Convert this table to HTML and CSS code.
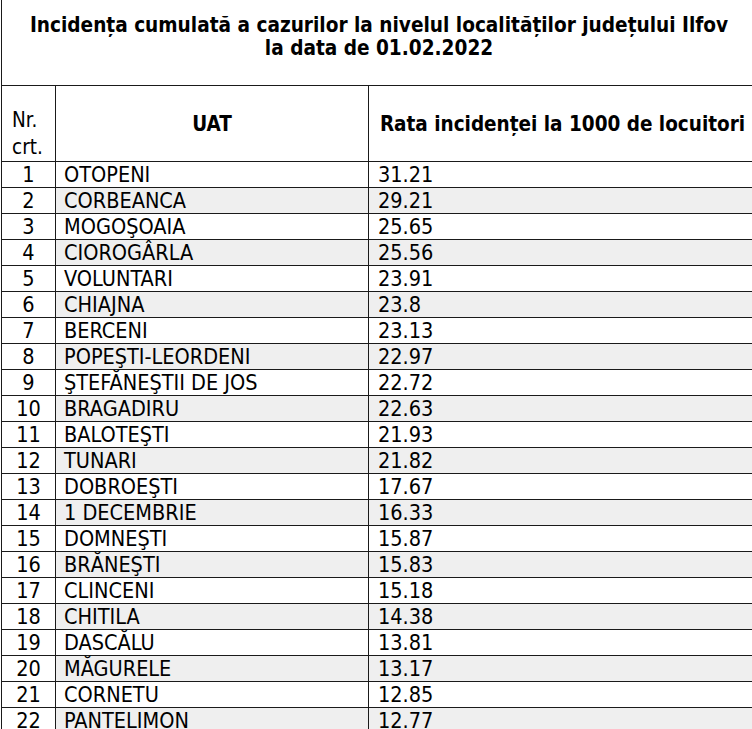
FILE: index.html
```html
<!DOCTYPE html>
<html lang="ro">
<head>
<meta charset="utf-8">
<title>Incidența cumulată Ilfov</title>
<link rel="stylesheet" href="styles.css">
</head>
<body>
<table class="grid">
  <colgroup>
    <col class="c-nr">
    <col class="c-uat">
    <col class="c-rate">
  </colgroup>
  <tr class="title-row">
    <td colspan="3" class="title">Incidența cumulată a cazurilor la nivelul localităților județului Ilfov<br>la data de 01.02.2022</td>
  </tr>
  <tr class="head-row">
    <td class="h-nr">Nr.<br>crt.</td>
    <td class="h-uat">UAT</td>
    <td class="h-rate">Rata incidenței la 1000 de locuitori</td>
  </tr>
  <tr><td class="nr">1</td><td class="uat">OTOPENI</td><td class="rate">31.21</td></tr>
  <tr class="alt"><td class="nr">2</td><td class="uat">CORBEANCA</td><td class="rate">29.21</td></tr>
  <tr><td class="nr">3</td><td class="uat">MOGOŞOAIA</td><td class="rate">25.65</td></tr>
  <tr class="alt"><td class="nr">4</td><td class="uat">CIOROGÂRLA</td><td class="rate">25.56</td></tr>
  <tr><td class="nr">5</td><td class="uat">VOLUNTARI</td><td class="rate">23.91</td></tr>
  <tr class="alt"><td class="nr">6</td><td class="uat">CHIAJNA</td><td class="rate">23.8</td></tr>
  <tr><td class="nr">7</td><td class="uat">BERCENI</td><td class="rate">23.13</td></tr>
  <tr class="alt"><td class="nr">8</td><td class="uat">POPEŞTI-LEORDENI</td><td class="rate">22.97</td></tr>
  <tr><td class="nr">9</td><td class="uat">ŞTEFĂNEŞTII DE JOS</td><td class="rate">22.72</td></tr>
  <tr class="alt"><td class="nr">10</td><td class="uat">BRAGADIRU</td><td class="rate">22.63</td></tr>
  <tr><td class="nr">11</td><td class="uat">BALOTEŞTI</td><td class="rate">21.93</td></tr>
  <tr class="alt"><td class="nr">12</td><td class="uat">TUNARI</td><td class="rate">21.82</td></tr>
  <tr><td class="nr">13</td><td class="uat">DOBROEŞTI</td><td class="rate">17.67</td></tr>
  <tr class="alt"><td class="nr">14</td><td class="uat">1 DECEMBRIE</td><td class="rate">16.33</td></tr>
  <tr><td class="nr">15</td><td class="uat">DOMNEŞTI</td><td class="rate">15.87</td></tr>
  <tr class="alt"><td class="nr">16</td><td class="uat">BRĂNEŞTI</td><td class="rate">15.83</td></tr>
  <tr><td class="nr">17</td><td class="uat">CLINCENI</td><td class="rate">15.18</td></tr>
  <tr class="alt"><td class="nr">18</td><td class="uat">CHITILA</td><td class="rate">14.38</td></tr>
  <tr><td class="nr">19</td><td class="uat">DASCĂLU</td><td class="rate">13.81</td></tr>
  <tr class="alt"><td class="nr">20</td><td class="uat">MĂGURELE</td><td class="rate">13.17</td></tr>
  <tr><td class="nr">21</td><td class="uat">CORNETU</td><td class="rate">12.85</td></tr>
  <tr class="alt"><td class="nr">22</td><td class="uat">PANTELIMON</td><td class="rate">12.77</td></tr>
</table>
</body>
</html>
```

FILE: styles.css
```css
html, body {
  margin: 0;
  padding: 0;
  background: #ffffff;
  overflow: hidden;
}

body {
  font-family: "DejaVu Sans Condensed", "DejaVu Sans", sans-serif;
  color: #000000;
}

.grid {
  border-collapse: collapse;
  table-layout: fixed;
  width: 755px;
  margin-left: 1px;
}

.c-nr { width: 54px; }
.c-uat { width: 313px; }
.c-rate { width: 388px; }

.grid td {
  border: 1px solid #1a1a1a;
  padding: 0;
  font-size: 21.5px;
  line-height: 24px;
  height: 25px;
  vertical-align: bottom;
  white-space: nowrap;
}

.grid .title {
  border-top: none;
  height: 71px;
  padding-top: 14px;
  font-size: 20.6px;
  font-weight: bold;
  text-align: center;
  vertical-align: top;
  line-height: 23px;
}

.grid .head-row td {
  height: 75px;
}

.grid .h-nr {
  padding-left: 10px;
  font-size: 20.5px;
  line-height: 27px;
}

.grid .h-uat,
.grid .h-rate {
  font-size: 20.5px;
  font-weight: bold;
  text-align: center;
  vertical-align: middle;
}

.grid .nr {
  text-align: center;
}

.grid .uat {
  padding-left: 8px;
}

.grid .rate {
  padding-left: 9px;
}

.grid .alt .uat,
.grid .alt .rate {
  background: #efefef;
}
```
